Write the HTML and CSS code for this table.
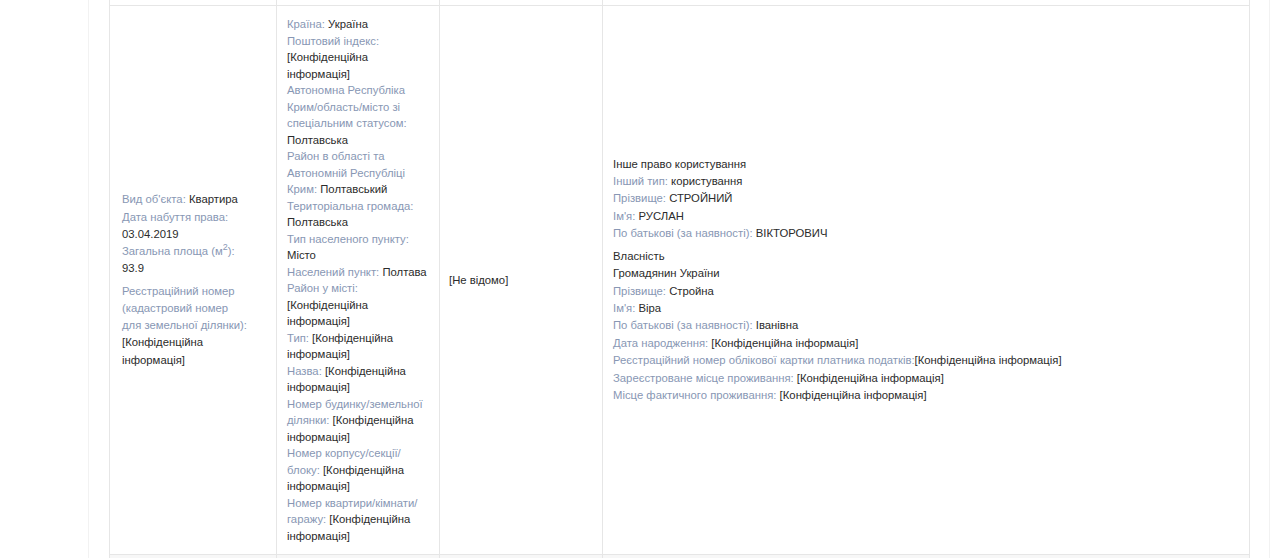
FILE: index.html
```html
<!DOCTYPE html>
<html lang="uk">
<head>
<meta charset="utf-8">
<title>Об'єкт нерухомого майна</title>
<link rel="stylesheet" href="styles.css">
</head>
<body>
<div class="panel">
  <table class="grid">
    <colgroup>
      <col class="c1"><col class="c2"><col class="c3"><col class="c4">
    </colgroup>
    <tr class="row-cut"><td></td><td></td><td></td><td></td></tr>
    <tr class="row-main">
      <td class="cell cell-obj">
        <div class="grp">
          <div><span class="l">Вид об'єкта:</span> Квартира</div>
          <div><span class="l">Дата набуття права:</span> 03.04.2019</div>
          <div><span class="l">Загальна площа (м<sup>2</sup>):</span> 93.9</div>
        </div>
        <div class="grp">
          <div><span class="l">Реєстраційний номер (кадастровий номер для земельної ділянки):</span> [Конфіденційна інформація]</div>
        </div>
      </td>
      <td class="cell cell-addr">
        <div><span class="l">Країна:</span> Україна</div>
        <div><span class="l">Поштовий індекс:</span> [Конфіденційна інформація]</div>
        <div><span class="l">Автономна Республіка Крим/область/місто зі спеціальним статусом:</span> Полтавська</div>
        <div><span class="l">Район в області та Автономній Республіці Крим:</span> Полтавський</div>
        <div><span class="l">Територіальна громада:</span> Полтавська</div>
        <div><span class="l">Тип населеного пункту:</span> Місто</div>
        <div><span class="l">Населений пункт:</span> Полтава</div>
        <div><span class="l">Район у місті:</span> [Конфіденційна інформація]</div>
        <div><span class="l">Тип:</span> [Конфіденційна інформація]</div>
        <div><span class="l">Назва:</span> [Конфіденційна інформація]</div>
        <div><span class="l">Номер будинку/земельної ділянки:</span> [Конфіденційна інформація]</div>
        <div><span class="l">Номер корпусу/секції/ блоку:</span> [Конфіденційна інформація]</div>
        <div><span class="l">Номер квартири/кімнати/ гаражу:</span> [Конфіденційна інформація]</div>
      </td>
      <td class="cell cell-misc">[Не відомо]</td>
      <td class="cell cell-owner">
        <div class="grp">
          <div>Інше право користування</div>
          <div><span class="l">Інший тип:</span> користування</div>
          <div><span class="l">Прізвище:</span> СТРОЙНИЙ</div>
          <div><span class="l">Ім'я:</span> РУСЛАН</div>
          <div><span class="l">По батькові (за наявності):</span> ВІКТОРОВИЧ</div>
        </div>
        <div class="grp">
          <div>Власність</div>
          <div>Громадянин України</div>
          <div><span class="l">Прізвище:</span> Стройна</div>
          <div><span class="l">Ім'я:</span> Віра</div>
          <div><span class="l">По батькові (за наявності):</span> Іванівна</div>
          <div><span class="l">Дата народження:</span> [Конфіденційна інформація]</div>
          <div><span class="l">Реєстраційний номер облікової картки платника податків:</span>[Конфіденційна інформація]</div>
          <div><span class="l">Зареєстроване місце проживання:</span> [Конфіденційна інформація]</div>
          <div><span class="l">Місце фактичного проживання:</span> [Конфіденційна інформація]</div>
        </div>
      </td>
    </tr>
    <tr class="row-next"><td></td><td></td><td></td><td></td></tr>
  </table>
</div>
</body>
</html>
```

FILE: styles.css
```css
html, body {
  margin: 0;
  padding: 0;
  background: #ffffff;
}

body {
  font-family: "Liberation Sans", Arial, sans-serif;
  font-size: 11.3px;
  color: #2b2b2b;
  overflow: hidden;
}

.panel {
  margin-left: 88px;
  width: 1140px;
  padding: 0 20px;
  border-left: 1px solid #f2f2f2;
  border-right: 1px solid #f2f2f2;
  min-height: 558px;
  box-sizing: content-box;
}

.grid {
  width: 1140px;
  table-layout: fixed;
  border-collapse: collapse;
}

.c1 { width: 167px; }
.c2 { width: 163px; }
.c3 { width: 163px; }
.c4 { width: 647px; }

.grid td {
  border: 1px solid #e6e6e6;
  vertical-align: middle;
  padding: 0;
}

.grid .row-cut td {
  border-top: none;
  height: 5px;
}

.grid .row-next td {
  height: 6px;
  border-top: 1px solid #e6e6e6;
  background: #f7f7f7;
}

.grid td.cell {
  padding: 10px 10px;
  line-height: 16.5px;
}

.grid td.cell-obj {
  padding-left: 12px;
  padding-right: 27px;
  line-height: 17.25px;
}

.grid td.cell-misc {
  padding-left: 9px;
}

.grid td.cell-owner {
  line-height: 17.4px;
}

.grp + .grp {
  margin-top: 5px;
}

.l {
  color: #8897b4;
}

sup {
  font-size: 9px;
  line-height: 0;
  vertical-align: 5px;
}
```
